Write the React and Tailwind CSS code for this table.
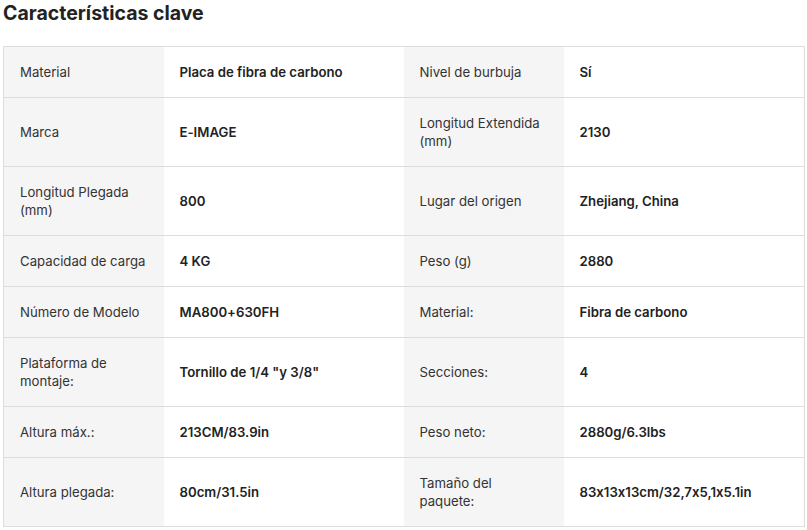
const rows = [
  ['Material', 'Placa de fibra de carbono', 'Nivel de burbuja', 'Sí'],
  ['Marca', 'E-IMAGE', 'Longitud Extendida (mm)', '2130'],
  ['Longitud Plegada (mm)', '800', 'Lugar del origen', 'Zhejiang, China'],
  ['Capacidad de carga', '4 KG', 'Peso (g)', '2880'],
  ['Número de Modelo', 'MA800+630FH', 'Material:', 'Fibra de carbono'],
  ['Plataforma de montaje:', 'Tornillo de 1/4 "y 3/8"', 'Secciones:', '4'],
  ['Altura máx.:', '213CM/83.9in', 'Peso neto:', '2880g/6.3lbs'],
  ['Altura plegada:', '80cm/31.5in', 'Tamaño del paquete:', '83x13x13cm/32,7x5,1x5.1in'],
]

const Label = ({ children }) => (
  <td className="bg-[#f5f5f5] px-4 py-4 align-middle font-normal text-[#333]">{children}</td>
)

const Value = ({ children }) => (
  <td className="px-4 py-4 align-middle font-semibold text-[#222]">{children}</td>
)

export default function App() {
  return (
    <div className="min-h-screen bg-white pl-[3px] pr-[2px] font-['Inter',sans-serif] [font-feature-settings:'calt'_0]">
      <h2 className="pt-[1px] text-[19.5px] font-bold leading-[24px] text-[#222]">Características clave</h2>
      <table className="mt-[21px] w-full table-fixed border-collapse border border-[#ddd] text-[13.2px] leading-[18px]">
        <colgroup>
          <col className="w-[160px]" />
          <col className="w-[240px]" />
          <col className="w-[160px]" />
          <col />
        </colgroup>
        <tbody>
          {rows.map((r, i) => (
            <tr key={i} className="border-b border-[#ddd]">
              <Label>{r[0]}</Label>
              <Value>{r[1]}</Value>
              <Label>{r[2]}</Label>
              <Value>{r[3]}</Value>
            </tr>
          ))}
        </tbody>
      </table>
    </div>
  )
}
